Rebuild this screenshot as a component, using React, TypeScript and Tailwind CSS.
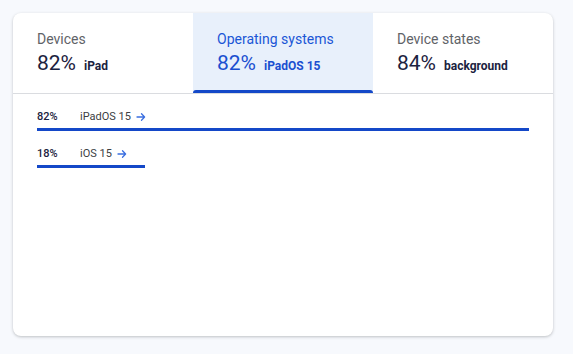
const tabs = [
  { label: 'Devices', value: '82%', detail: 'iPad' },
  { label: 'Operating systems', value: '82%', detail: 'iPadOS 15' },
  { label: 'Device states', value: '84%', detail: 'background' },
];

const rows = [
  { pct: '82%', name: 'iPadOS 15', width: 492 },
  { pct: '18%', name: 'iOS 15', width: 108 },
];

const Arrow = () => (
  <svg width="10" height="10" viewBox="0 0 10 10" className="ml-[5px]" fill="none">
    <path d="M1 5h7.5M5.5 1.8 8.6 5 5.5 8.2" stroke="#3b6fe0" strokeWidth="1.3" strokeLinecap="round" strokeLinejoin="round" />
  </svg>
);

export default function App() {
  const active = 1;
  return (
    <div className="min-h-screen bg-[#f7f9fd] pt-[13px] pl-[13px]" style={{ fontFamily: 'Roboto, "Liberation Sans", sans-serif' }}>
      <div className="w-[540px] h-[323px] bg-white rounded-[8px] shadow-[0_1px_3px_rgba(60,64,67,0.3)] overflow-hidden">
        <div className="flex border-b border-[#dadce0]">
          {tabs.map((t, i) => (
            <div
              key={t.label}
              className={`relative w-[180px] h-[80px] pl-[24px] pt-[16px] ${i === active ? 'bg-[#e8f0fb]' : ''}`}
            >
              <div className={`text-[14px] leading-[20px] ${i === active ? 'text-[#1a56d6]' : 'text-[#5f6368]'}`}>{t.label}</div>
              <div className={`flex items-baseline mt-[1px] ${i === active ? 'text-[#1a4fd0]' : 'text-[#1b2240]'}`}>
                <span className="text-[21px] leading-[26px]">{t.value}</span>
                <span className="text-[12px] font-bold ml-[8px]">{t.detail}</span>
              </div>
              {i === active && <div className="absolute left-0 right-0 bottom-0 h-[3px] rounded-t-[3px] bg-[#1448c8]" />}
            </div>
          ))}
        </div>
        <div className="pl-[24px] pt-[16px]">
          {rows.map((r) => (
            <div key={r.name} className="h-[37px]">
              <div className="flex items-center h-[14px]">
                <span className="w-[43px] text-[11px] font-medium text-[#1b2240]">{r.pct}</span>
                <span className="text-[11px] text-[#3c4043]">{r.name}</span>
                <Arrow />
              </div>
              <div className="mt-[4px] h-[3px] bg-[#1448c8]" style={{ width: r.width }} />
            </div>
          ))}
        </div>
      </div>
    </div>
  );
}
